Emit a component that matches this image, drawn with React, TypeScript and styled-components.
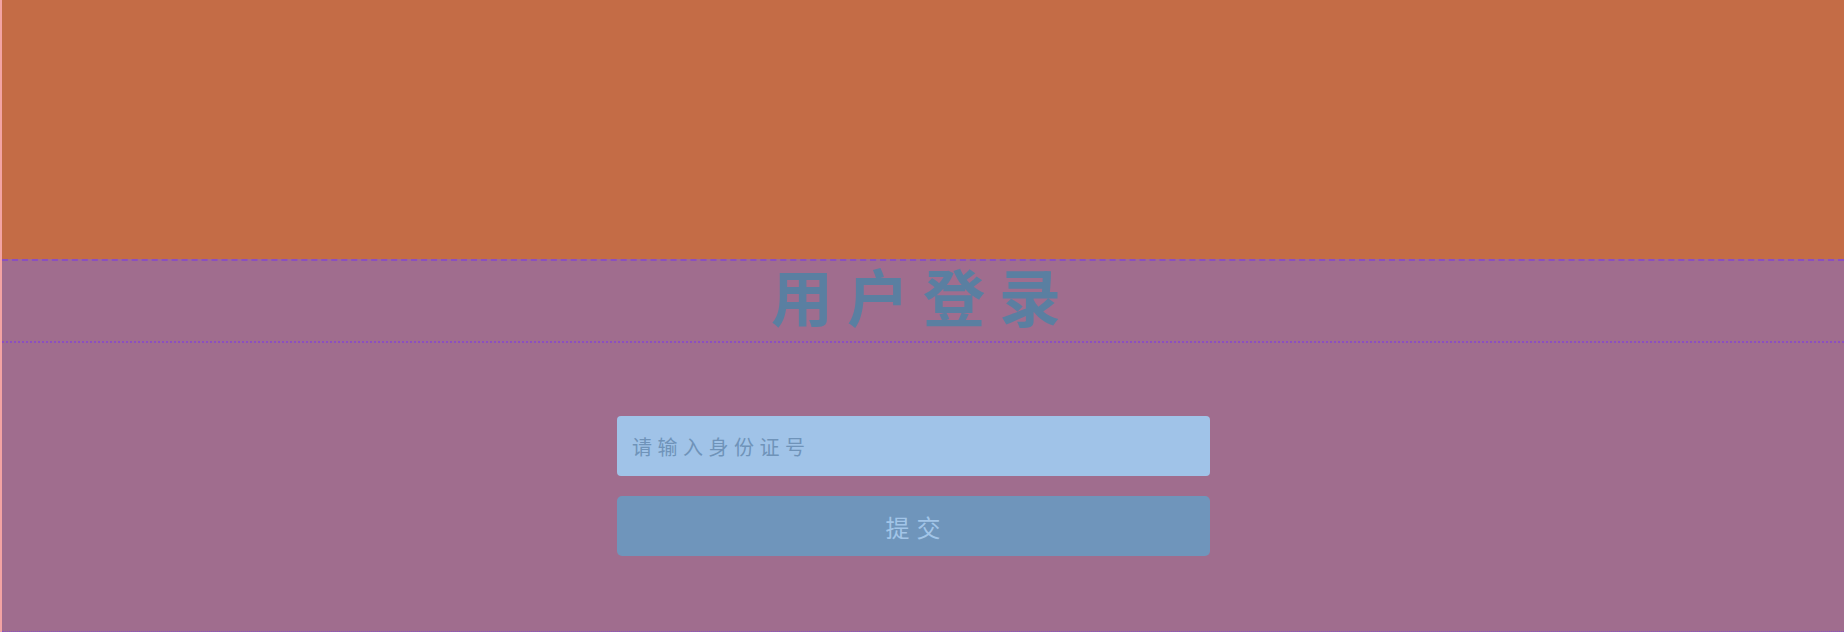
import React from "react";
import styled, { createGlobalStyle } from "styled-components";

const Global = createGlobalStyle`
  html, body { margin: 0; padding: 0; background: #f6c6c6; }
  body { font-family: "Noto Sans CJK SC", "Noto Sans", sans-serif; }
  * { box-sizing: border-box; }
`;

const Page = styled.div`
  width: 1844px;
  height: 632px;
  border-left: 2px solid #f3a3a3;
  display: flex;
  flex-direction: column;
  overflow: hidden;
`;

const Header = styled.header`
  height: 259px;
  flex: none;
  background: #c46c46;
`;

const Main = styled.main`
  flex: 1;
  display: flex;
  flex-direction: column;
  background: #a06d8e;
  border-bottom: 1px dotted #8a4fc4;
`;

const TitleBar = styled.div`
  height: 84px;
  border-top: 2px dashed #8b4fc0;
  border-bottom: 2px dotted #8b4fc0;
  display: flex;
  align-items: center;
  justify-content: center;
`;

const Title = styled.h1`
  margin: 0 0 12px;
  font-size: 62px;
  line-height: 80px;
  font-weight: 700;
  letter-spacing: 14px;
  color: #5a7fa1;
`;

const Form = styled.form`
  display: flex;
  flex-direction: column;
  align-items: center;
  gap: 20px;
  padding-top: 73px;
  padding-right: 19px;
`;

const Input = styled.input`
  width: 593px;
  height: 60px;
  border: none;
  border-radius: 4px;
  background: #a0c3e8;
  padding: 0 15px;
  font-family: inherit;
  font-size: 20px;
  letter-spacing: 5.5px;
  color: #4f7398;
  outline: none;
  &::placeholder { color: #6f93b9; }
`;

const Button = styled.button`
  width: 593px;
  height: 60px;
  border: none;
  border-radius: 5px;
  background: #6f95bb;
  color: #a2c5e8;
  font-family: inherit;
  font-size: 24px;
  letter-spacing: 7px;
  padding-left: 12px;
  cursor: pointer;
`;

export default function App() {
  return (
    <>
      <Global />
      <Page>
        <Header />
        <Main>
          <TitleBar>
            <Title>用户登录</Title>
          </TitleBar>
          <Form onSubmit={(e) => e.preventDefault()}>
            <Input placeholder="请输入身份证号" />
            <Button type="submit">提交</Button>
          </Form>
        </Main>
      </Page>
    </>
  );
}
